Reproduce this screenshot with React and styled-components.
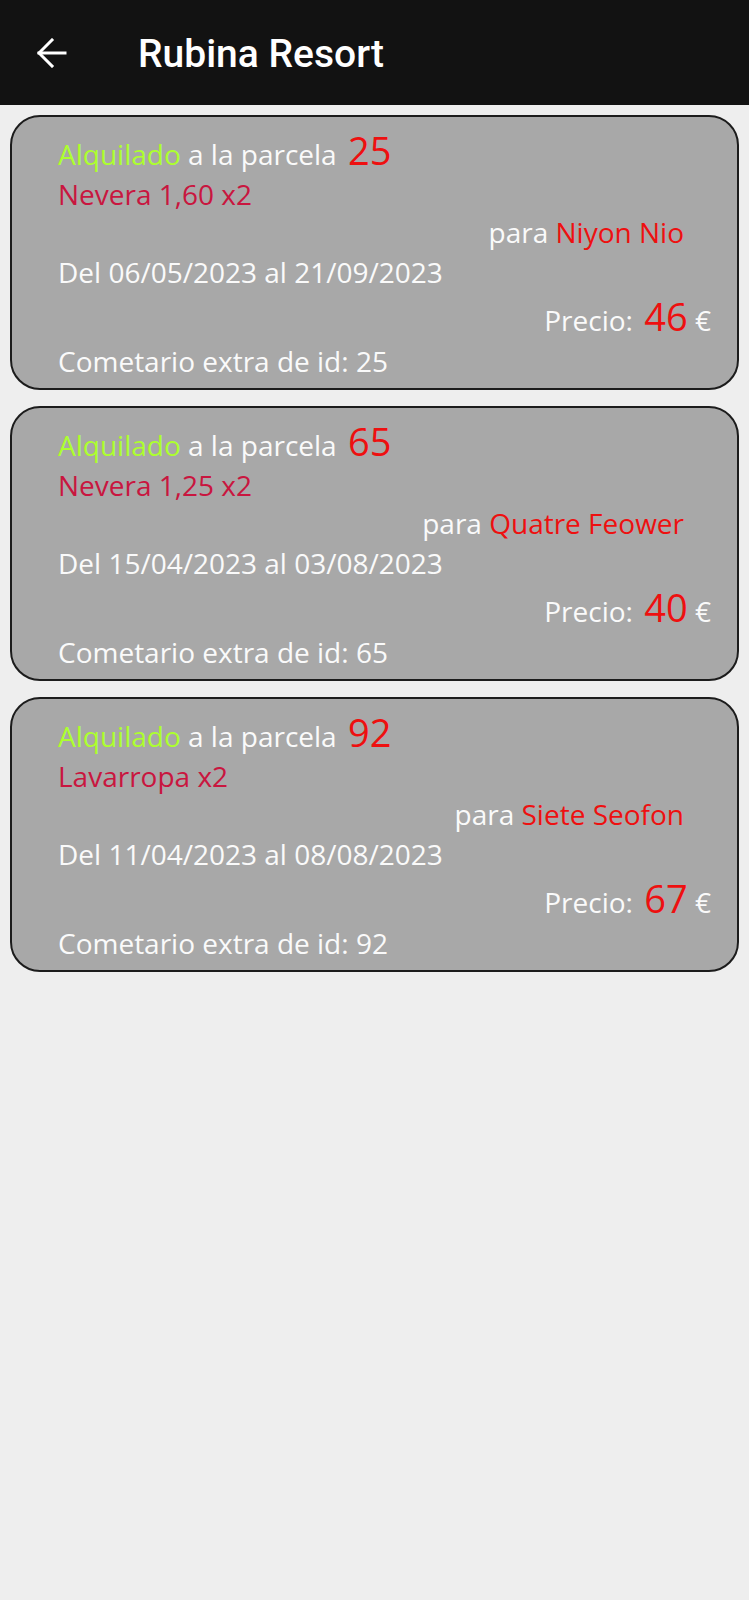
import React from 'react'
import styled, { createGlobalStyle } from 'styled-components'

const GlobalStyle = createGlobalStyle`
  body {
    margin: 0;
    background: #eeeeee;
    font-family: 'Open Sans', 'Liberation Sans', sans-serif;
  }
`

const colour = {
  bar: '#121212',
  card: '#a8a8a8',
  border: '#1c1c1c',
  white: '#fafafa',
  green: '#adff2f',
  red: '#ee1010',
  crimson: '#c9163f',
}

const rentals = [
  { plot: 25, item: 'Nevera 1,60 x2', client: 'Niyon Nio', from: '06/05/2023', to: '21/09/2023', price: 46 },
  { plot: 65, item: 'Nevera 1,25 x2', client: 'Quatre Feower', from: '15/04/2023', to: '03/08/2023', price: 40 },
  { plot: 92, item: 'Lavarropa x2', client: 'Siete Seofon', from: '11/04/2023', to: '08/08/2023', price: 67 },
]

const Page = styled.div`
  min-height: 1600px;
  background: #eeeeee;
`

const TopBar = styled.header`
  height: 105px;
  background: ${colour.bar};
  display: flex;
  align-items: center;
  padding-left: 37px;
  gap: 71px;
  box-sizing: border-box;
`

const BackIcon = styled.svg`
  width: 30px;
  height: 30px;
  flex: none;
`

const Title = styled.h1`
  margin: 0;
  padding-top: 2px;
  font-family: Roboto, 'Liberation Sans', sans-serif;
  font-weight: 500;
  font-size: 39px;
  color: #ffffff;
`

const List = styled.main`
  display: flex;
  flex-direction: column;
  gap: 16px;
  padding: 10px 10px 0;
`

const Card = styled.section`
  background: ${colour.card};
  border: 2px solid ${colour.border};
  border-radius: 30px;
  padding: 14px 26px 8px 46px;
  color: ${colour.white};
  font-size: 28px;
`

const Line = styled.div`
  line-height: ${p => p.$lh || 38}px;
  margin-top: ${p => p.$mt || 0}px;
  margin-right: ${p => p.$mr || 0}px;
  text-align: ${p => (p.$right ? 'right' : 'left')};
  white-space: nowrap;
`

const Tint = styled.span`
  color: ${p => colour[p.$c]};
`

const Big = styled.span`
  color: ${colour.red};
  font-size: 38px;
  line-height: 1;
  margin-left: 4px;
`

const RentalCard = ({ r }) => (
  <Card>
    <Line $lh={42}>
      <Tint $c="green">Alquilado</Tint> a la parcela <Big>{r.plot}</Big>
    </Line>
    <Line>
      <Tint $c="crimson">{r.item}</Tint>
    </Line>
    <Line $right $mr={27}>
      para <Tint $c="red">{r.client}</Tint>
    </Line>
    <Line $mt={2}>
      Del {r.from} al {r.to}
    </Line>
    <Line $right $lh={44} $mt={6}>
      Precio: <Big>{r.price}</Big> €
    </Line>
    <Line>Cometario extra de id: {r.plot}</Line>
  </Card>
)

export default function App() {
  return (
    <Page>
      <GlobalStyle />
      <TopBar>
        <BackIcon viewBox="0 0 30 30" fill="none" stroke="#ffffff" strokeWidth="3" strokeLinecap="square">
          <path d="M2 15H28" />
          <path d="M15 2L2 15L15 28" />
        </BackIcon>
        <Title>Rubina Resort</Title>
      </TopBar>
      <List>
        {rentals.map(r => (
          <RentalCard key={r.plot} r={r} />
        ))}
      </List>
    </Page>
  )
}
